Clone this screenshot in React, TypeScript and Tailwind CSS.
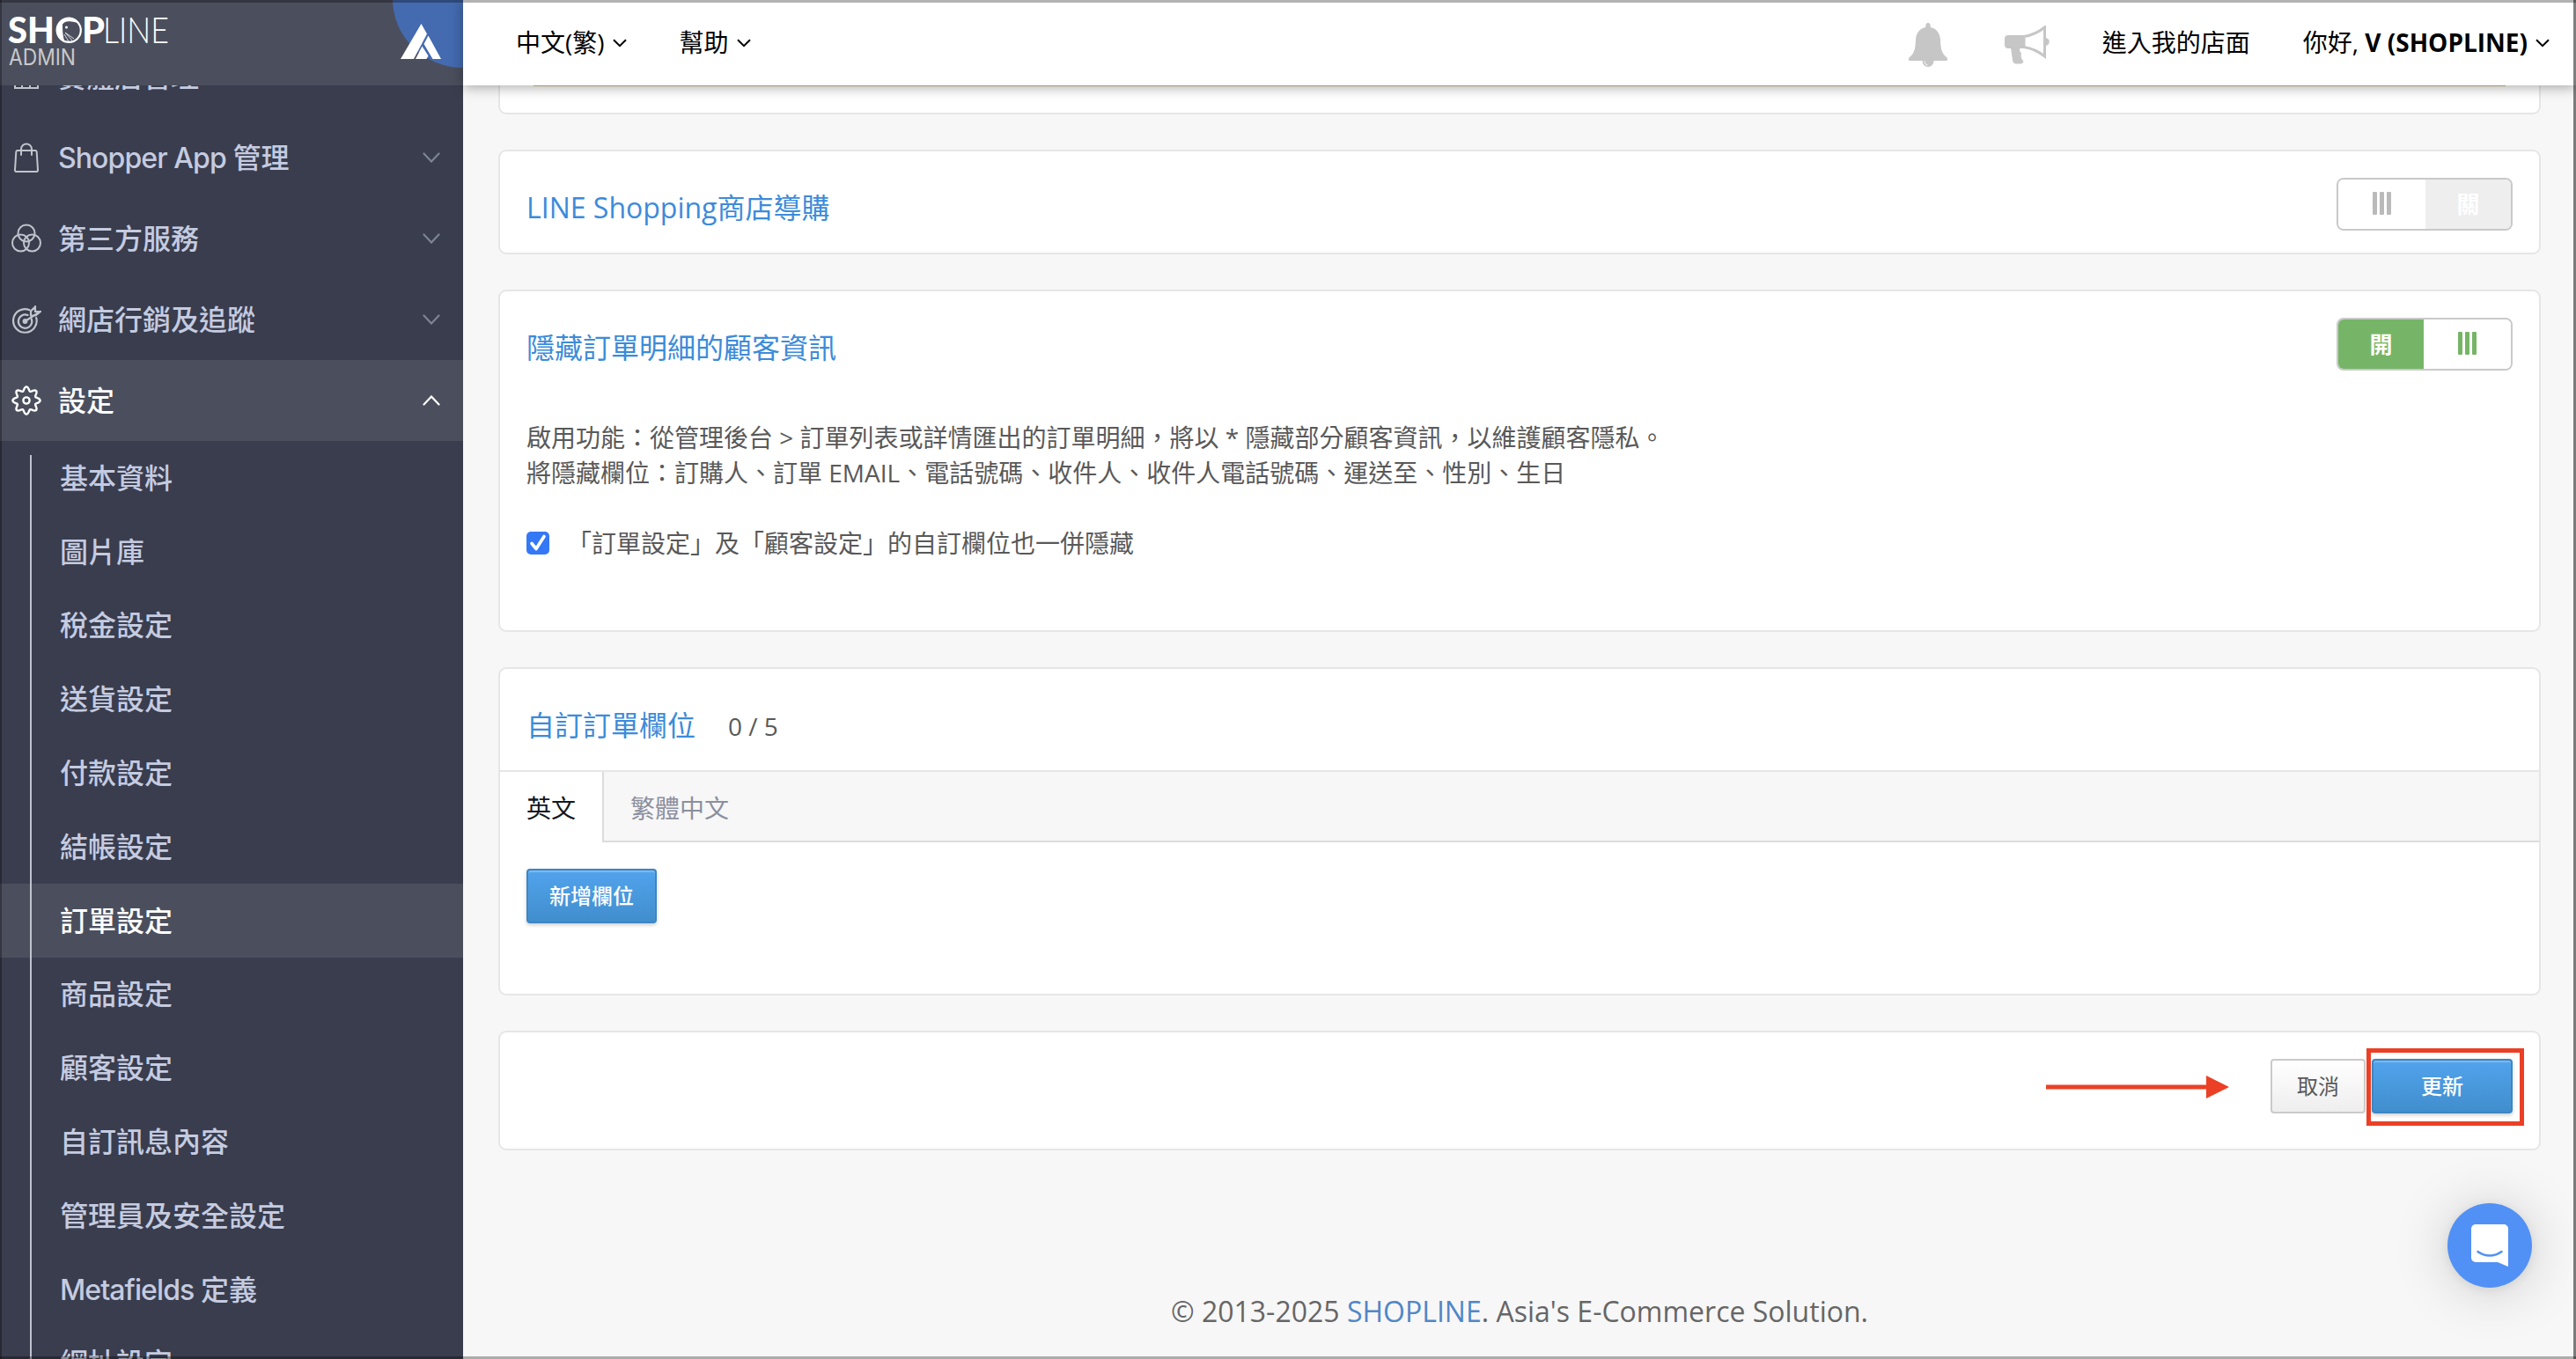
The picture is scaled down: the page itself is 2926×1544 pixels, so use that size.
import { useState } from 'react';
import type { ReactNode } from 'react';
import clsx from 'clsx';

const settingItems = [
    '基本資料',
    '圖片庫',
    '稅金設定',
    '送貨設定',
    '付款設定',
    '結帳設定',
    '訂單設定',
    '商品設定',
    '顧客設定',
    '自訂訊息內容',
    '管理員及安全設定',
    'Metafields 定義',
    '網址設定'
];

const StoreIcon = () => (
    <svg width="34" height="34" viewBox="0 0 34 34" fill="none" stroke="currentColor" strokeWidth="2">
        <path d="M4 14v16h26V14M2 12l4-8h22l4 8z" />
        <path d="M12 30V20h9v10" />
    </svg>
);

const BagIcon = () => (
    <svg width="34" height="36" viewBox="0 0 34 36" fill="none" stroke="currentColor" strokeWidth="2" strokeLinecap="round" strokeLinejoin="round">
        <path d="M7 10h20c1 0 1.600.6 1.700 1.500L30 32c.1 1.200-.7 2-1.800 2H5.800C4.700 34 3.900 33.200 4 32l1.300-20.500C5.400 10.600 6 10 7 10z" />
        <path d="M11 15V8.500a6 6 0 0 1 12 0V15" />
    </svg>
);

const CirclesIcon = () => (
    <svg width="34" height="34" viewBox="0 0 34 34" fill="none" stroke="currentColor" strokeWidth="2">
        <circle cx="17" cy="11" r="9.500" />
        <circle cx="10.500" cy="22" r="9.500" />
        <circle cx="23.500" cy="22" r="9.500" />
    </svg>
);

const TargetIcon = () => (
    <svg width="34" height="34" viewBox="0 0 34 34" fill="none" stroke="currentColor" strokeWidth="2.200" strokeLinecap="round">
        <path d="M20.500 6.200A13.300 13.300 0 1 0 28.200 15" />
        <path d="M18.500 12a7.700 7.700 0 1 0 4.300 4.500" />
        <circle cx="15.500" cy="19" r="1.800" fill="currentColor" />
        <path d="M15.500 19 32.500 8H27V2M22 12.500V7.500l5-5M22 12.500h5.500L33 8" />
    </svg>
);

// Eight soft teeth round the hub
const gearOutline = Array.from({ length: 128 }, (_, i) => {
    const angle = (i / 128) * Math.PI * 2;
    const radius = 13.3 + 2.3 * Math.cos(8 * angle);
    return `${(17 + radius * Math.cos(angle)).toFixed(2)},${(17 + radius * Math.sin(angle)).toFixed(2)}`;
}).join(' ');

const GearIcon = () => (
    <svg width="34" height="34" viewBox="0 0 34 34" fill="none" stroke="currentColor" strokeWidth="2.400" strokeLinejoin="round">
        <circle cx="17" cy="17" r="3.600" />
        <polygon points={gearOutline} />
    </svg>
);

const Chevron = ({ up = false, className }: { up?: boolean; className?: string }) => (
    <svg width="20" height="12" viewBox="0 0 20 12" fill="none" stroke="currentColor" strokeWidth="2.200" strokeLinecap="round" className={className}>
        <path d={up ? 'M1.500 10.500 10 1.500l8.500 9' : 'M1.500 1.500l8.500 9 8.500-9'} />
    </svg>
);

const CaretDown = () => (
    <svg width="16" height="10" viewBox="0 0 16 10" fill="none" stroke="currentColor" strokeWidth="2">
        <path d="M1 1.200l7 7 7-7" />
    </svg>
);

const Brand = () => (
    <svg width="526" height="97" viewBox="0 0 526 97" className="block shrink-0">
        <rect width="526" height="97" fill="#4b4f5d" />
        <ellipse cx="526" cy="-1" rx="80" ry="78" fill="#446bb0" />
        <g fill="#fff" fontFamily="Lato, sans-serif" fontSize="41">
            <text x="9" y="49" fontWeight="900" textLength="53" lengthAdjust="spacingAndGlyphs">SH</text>
            <text x="93" y="49" fontWeight="900" textLength="26" lengthAdjust="spacingAndGlyphs">P</text>
            <text x="117" y="49" fontWeight="300" textLength="75" lengthAdjust="spacingAndGlyphs">LINE</text>
        </g>
        <circle cx="78.500" cy="34.500" r="13.300" fill="#4b4f5d" stroke="#fff" strokeWidth="2.200" />
        <path d="M74 48.500C62 44 60 29 70 22c6-4.500 16-3 20.500 5-4-2-7-2-9.500-2.500-4-1-8 0-10 3 0 5 0 14 3 21z" fill="#fff" />
        <circle cx="75.500" cy="31" r="1.500" fill="#fff" />
        <path d="M74 37l8 9M74 37l10 7M73 39l5 8" stroke="#fff" strokeWidth=".8" />
        <text x="10" y="74" fill="#c9c9c9" fontFamily="Inter, sans-serif" fontSize="25" textLength="76" lengthAdjust="spacingAndGlyphs">ADMIN</text>
        <g fill="#fff">
            <path d="M478.500 27l6.500 11.500-15 28.500h-15z" />
            <path d="M486.500 40.500L501 67h-9.500l-10-17z" />
            <path d="M479.500 52.500l7 11-2 3.500H472z" />
        </g>
    </svg>
);

// Latin words in the menu are set a little tighter than the Chinese ones
const MenuLabel = ({ text }: { text: string }) => {
    const latin = text.match(/^[A-Za-z ]+/)?.[0] ?? '';

    return (
        <span className="pt-[2px]">
            {latin && <span className="tracking-[-0.900px]">{latin}</span>}
            {text.slice(latin.length)}
        </span>
    );
};

interface MenuRowProps {
    icon: ReactNode;
    label: string;
    open?: boolean;
}

const MenuRow = ({ icon, label, open = false }: MenuRowProps) => (
    <div className={clsx('flex h-[92px] items-center pl-[13px] pr-[26px]', open ? 'bg-[#4b4f5d] text-white' : 'text-[#c5cbe0]')}>
        <span className={clsx('w-[53px]', open ? 'text-white' : 'text-[#c0c4cc]')}>{icon}</span>
        <span className="flex flex-1 text-[32px] leading-[40px] font-medium">
            <MenuLabel text={label} />
        </span>
        <Chevron up={open} className={open ? 'text-white' : 'text-[#7d8496]'} />
    </div>
);

const Sidebar = () => (
    <aside className="flex h-full w-[526px] shrink-0 flex-col bg-[#393d4d] font-[Inter,'Noto_Sans_CJK_TC',sans-serif]">
        <Brand />
        <div className="min-h-0 flex-1 overflow-hidden">
            <nav className="-mt-[56px]">
                <MenuRow icon={<StoreIcon />} label="實體店管理" />
                <MenuRow icon={<BagIcon />} label="Shopper App 管理" />
                <MenuRow icon={<CirclesIcon />} label="第三方服務" />
                <MenuRow icon={<TargetIcon />} label="網店行銷及追蹤" />
                <MenuRow icon={<GearIcon />} label="設定" open />
                <ul className="relative">
                    {settingItems.map((item) => (
                        <li
                            key={item}
                            className={clsx(
                                'flex h-[83.800px] items-center pl-[68px] text-[32px] leading-[40px] font-medium',
                                item === '訂單設定' ? 'bg-[#4b4f5d] text-white' : 'text-[#c5cbe0]'
                            )}
                        >
                            <MenuLabel text={item} />
                        </li>
                    ))}
                    <span className="absolute top-4 bottom-0 left-[34px] w-[2px] bg-[#bfc3d0]" />
                </ul>
            </nav>
        </div>
    </aside>
);

const TopBar = () => (
    <header className="relative z-10 flex h-[97px] shrink-0 items-center bg-white pl-[60px] pr-[30px] text-[28px] leading-[40px] text-black shadow-[0_2px_14px_rgba(0,0,0,0.350)]">
        <div className="flex items-center gap-[9px]">
            <span className="pb-[2px]">中文(繁)</span>
            <CaretDown />
        </div>
        <div className="ml-[60px] flex items-center gap-[9px]">
            <span className="pb-[2px]">幫助</span>
            <CaretDown />
        </div>
        <svg width="46" height="50" viewBox="0 0 46 50" fill="#c6c6c6" className="mt-[5px] ml-auto">
            <path d="M20.300 3.500a2.700 3.500 0 0 1 5.400 0V5C33 6.500 36.500 12 37 19c.4 9 1 15 6.500 19.500 3 3 1.500 4.500-.5 4.500H3c-2 0-3.500-1.500-.5-4.500C8 34 8.600 28 9 19c.5-7 4-12.500 11.300-14z" />
            <path d="M16.500 43h13a6.500 7 0 0 1-13 0z" />
            <path d="M19 43.500c.2 2.500 1.500 4 3.500 4.500" fill="none" stroke="#fff" strokeWidth="1" />
        </svg>
        <svg width="52" height="45" viewBox="0 0 52 45" fill="#c6c6c6" className="mt-[6px] ml-[64px]">
            <path d="M4 11h19v15H4c-2.500 0-4-1.500-4-4v-7c0-2.500 1.500-4 4-4z" />
            <path d="M7 25h11c-2 3-.5 5 1 6-1 4 0 7 2 9 1 2-1 3.500-3 3.500h-5c-2 0-3.500-1.500-4-4z" />
            <path d="M22 12.500C32 11 38 8 45.500 2v33C38 29 32 26 22 24.500z" fill="none" stroke="#c6c6c6" strokeWidth="3" />
            <path d="M47 14c5 1 5 8 0 9z" />
        </svg>
        <span className="ml-[59px] pb-[2px]">進入我的店面</span>
        <span className="ml-[60px] pb-[2px]">
            你好, <b>V (SHOPLINE)</b>
        </span>
        <span className="ml-[9px] flex">
            <CaretDown />
        </span>
    </header>
);

const Card = ({ className, children }: { className?: string; children?: ReactNode }) => (
    <section className={clsx('shrink-0 rounded-[9px] border-2 border-[#e6e6e6] bg-white', className)}>{children}</section>
);

const CardTitle = ({ children }: { children: ReactNode }) => (
    <h2 className="text-[32px] leading-[44px] text-[#3c8bda]">{children}</h2>
);

const Grip = ({ className }: { className: string }) => (
    <span className="flex gap-[3px] pb-[3px]">
        <i className={clsx('h-[26px] w-[5px] rounded-[1px]', className)} />
        <i className={clsx('h-[26px] w-[5px] rounded-[1px]', className)} />
        <i className={clsx('h-[26px] w-[5px] rounded-[1px]', className)} />
    </span>
);

const Toggle = ({ defaultOn = false }: { defaultOn?: boolean }) => {
    const [on, setOn] = useState(defaultOn);

    return (
        <button
            onClick={() => setOn(!on)}
            className="flex h-[60px] w-[200px] overflow-hidden rounded-[8px] border-2 border-[#c9c9c9] text-[26px] font-bold text-white"
        >
            {on ? (
                <>
                    <span className="flex h-full w-[97px] items-center justify-center bg-[#76b567]">開</span>
                    <span className="flex h-full w-[99px] items-center justify-center bg-white">
                        <Grip className="bg-[#76b567]" />
                    </span>
                </>
            ) : (
                <>
                    <span className="flex h-full w-[99px] items-center justify-center bg-white">
                        <Grip className="bg-[#bababa]" />
                    </span>
                    <span className="flex h-full w-[97px] items-center justify-center bg-[#eeeeee]">關</span>
                </>
            )}
        </button>
    );
};

const PrimaryButton = ({ className, children }: { className: string; children: ReactNode }) => (
    <button
        className={clsx(
            'h-[62px] rounded-[4px] border-2 border-[#3d85c2] bg-linear-to-b from-[#51a3ed] to-[#418ecd] text-[24px] font-medium text-white shadow-[0_2px_4px_rgba(0,0,0,0.200),inset_0_2px_1px_rgba(255,255,255,0.250)]',
            className
        )}
    >
        {children}
    </button>
);

const App = () => {
    const [hideCustom, setHideCustom] = useState(true);

    return (
        <div className="relative flex h-[1544px] w-[2926px] overflow-hidden bg-[#f7f7f7] font-['Open_Sans','Noto_Sans_CJK_TC',sans-serif] text-[#595959]">
            <Sidebar />

            <div className="flex min-w-0 flex-1 flex-col">
                <TopBar />

                <main className="flex flex-col gap-10 pl-[40px] pr-[40px]">
                    {/* Tail of the card that is scrolled under the top bar */}
                    <div className="h-[33px] rounded-b-[9px] border-2 border-t-0 border-[#e6e6e6] bg-white px-[38px]">
                        <div className="h-px bg-[#d8bd82]" />
                    </div>

                    <Card className="flex h-[119px] items-start justify-between px-[30px] pt-[30px]">
                        <div className="pt-[12px]">
                            <CardTitle>LINE Shopping商店導購</CardTitle>
                        </div>
                        <Toggle />
                    </Card>

                    <Card className="h-[389px] px-[30px] pt-[30px]">
                        <div className="flex items-start justify-between">
                            <div className="pt-[12px]">
                                <CardTitle>隱藏訂單明細的顧客資訊</CardTitle>
                            </div>
                            <Toggle defaultOn />
                        </div>
                        <p className="mt-[56px] text-[28px] leading-[40px]">
                            啟用功能：從管理後台 &gt; 訂單列表或詳情匯出的訂單明細，將以 * 隱藏部分顧客資訊，以維護顧客隱私。
                            <br />
                            將隱藏欄位：訂購人、訂單 EMAIL、電話號碼、收件人、收件人電話號碼、運送至、性別、生日
                        </p>
                        <label className="mt-[40px] flex h-[40px] items-center text-[28px] leading-[40px]">
                            <input type="checkbox" className="sr-only" checked={hideCustom} onChange={() => setHideCustom(!hideCustom)} />
                            <svg width="26" height="26" viewBox="0 0 26 26" className="mr-[20px]">
                                <rect width="26" height="26" rx="5" fill="#3478f6" />
                                {hideCustom && (
                                    <path d="M6 13.500l5 6 9-14" fill="none" stroke="#fff" strokeWidth="3.600" strokeLinecap="round" strokeLinejoin="round" />
                                )}
                            </svg>
                            「訂單設定」及「顧客設定」的自訂欄位也一併隱藏
                        </label>
                    </Card>

                    <Card className="h-[373px]">
                        <div className="flex h-[117px] gap-[37px] border-b-2 border-[#e6e6e6] px-[30px] pt-[42px]">
                            <CardTitle>自訂訂單欄位</CardTitle>
                            <span className="text-[28px] leading-[46px]">0 / 5</span>
                        </div>
                        <div className="flex h-[80px] text-[28px]">
                            <div className="flex w-[118px] items-center border-r-2 border-[#dcdcdc] pt-[1px] pl-[30px] text-[#15171c]">英文</div>
                            <div className="flex flex-1 items-center border-b-2 border-[#dcdcdc] bg-[#f7f7f7] pt-[3px] pl-[30px] text-[#8b8f9e]">繁體中文</div>
                        </div>
                        <div className="px-[30px] pt-[30px]">
                            <PrimaryButton className="w-[148px]">新增欄位</PrimaryButton>
                        </div>
                    </Card>

                    <Card className="flex h-[136px] items-start justify-end pt-[30px] pr-[30px]">
                        <svg width="208" height="26" viewBox="0 0 208 26" fill="#eb4025" className="mt-[19px] mr-[47px]">
                            <path d="M0 10.500h182V0l26 13-26 13V15.500H0z" />
                        </svg>
                        <button className="mr-[7px] h-[62px] w-[108px] rounded-[4px] border-2 border-[#cacaca] bg-linear-to-b from-white to-[#eeeeee] text-[24px]">
                            取消
                        </button>
                        <div className="relative">
                            <PrimaryButton className="w-[160px]">更新</PrimaryButton>
                            <span className="absolute -top-[12px] -right-[13px] -bottom-[14px] -left-[6px] border-[5px] border-[#eb4025]" />
                        </div>
                    </Card>
                </main>

                <footer className="mt-[161px] text-center text-[32px] leading-[44px] text-[#666666]">
                    © 2013-2025 <a className="text-[#5087c7]">SHOPLINE</a>. Asia's E-Commerce Solution.
                </footer>
            </div>

            {/* Chat launcher */}
            <button className="absolute top-[1367px] left-[2780px] flex h-24 w-24 items-center justify-center rounded-full bg-[#5191f5] shadow-[0_2px_12px_rgba(0,0,0,0.080),0_4px_64px_rgba(0,0,0,0.180)]">
                <svg width="42" height="48" viewBox="0 0 42 48">
                    <path d="M5 0h32a5 5 0 0 1 5 5v43l-12-5H5a5 5 0 0 1-5-5V5a5 5 0 0 1 5-5z" fill="#fff" />
                    <path d="M7.500 31c8 6 19 6 27 0" fill="none" stroke="#5191f5" strokeWidth="2.600" strokeLinecap="round" />
                </svg>
            </button>

            {/* Window edges */}
            <span className="absolute inset-x-0 top-0 z-20 h-[3px] bg-black/30" />
            <span className="absolute inset-x-0 bottom-0 z-20 h-[3px] bg-black/30" />
            <span className="absolute inset-y-0 left-0 z-20 w-[2px] bg-black/30" />
            <span className="absolute inset-y-0 right-0 z-20 w-[3px] bg-black/50" />
        </div>
    );
};

export default App;
